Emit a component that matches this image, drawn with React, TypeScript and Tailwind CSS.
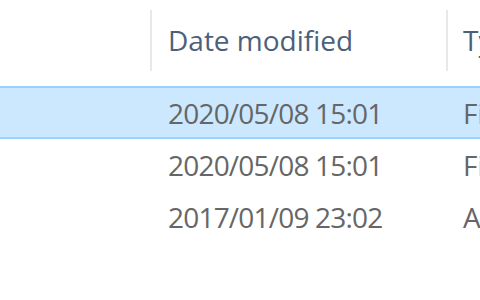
import React from "react";

type Row = { date: string; type: string; selected?: boolean };

const rows: Row[] = [
  { date: "2020/05/08 15:01", type: "File folder", selected: true },
  { date: "2020/05/08 15:01", type: "File folder" },
  { date: "2017/01/09 23:02", type: "Application" },
];

const font = { fontFamily: '"Open Sans", "Noto Sans", "Liberation Sans", sans-serif' };

function ColumnDivider() {
  return <div className="h-[61px] w-[2px] shrink-0 bg-[#e8e8e8]" aria-hidden />;
}

export default function App() {
  return (
    <div
      className="h-[300px] w-[480px] overflow-hidden bg-white text-[28px] leading-none"
      style={font}
    >
      {/* column headers */}
      <div className="flex h-[86px] items-start pt-[10px] text-[#4c607a]">
        <div className="w-[150px] shrink-0" />
        <ColumnDivider />
        <div className="flex h-[61px] w-[294px] shrink-0 items-center pl-[16px] pb-[2px]">
          Date modified
        </div>
        <ColumnDivider />
        <div className="flex h-[61px] items-center whitespace-nowrap pl-[15px] pb-[2px]">
          Type
        </div>
      </div>

      {/* rows */}
      {rows.map((row, i) => (
        <div
          key={i}
          className={
            row.selected
              ? "flex h-[53px] items-center whitespace-nowrap border-y-2 border-[#99d1ff] bg-[#cce8ff] text-[#666666]"
              : "flex h-[52px] items-center whitespace-nowrap text-[#666666]"
          }
        >
          <div className="w-[152px] shrink-0" />
          <div className="w-[296px] shrink-0 pl-[16px] tracking-[-0.8px]">{row.date}</div>
          <div className="pl-[15px]">{row.type}</div>
        </div>
      ))}
    </div>
  );
}
